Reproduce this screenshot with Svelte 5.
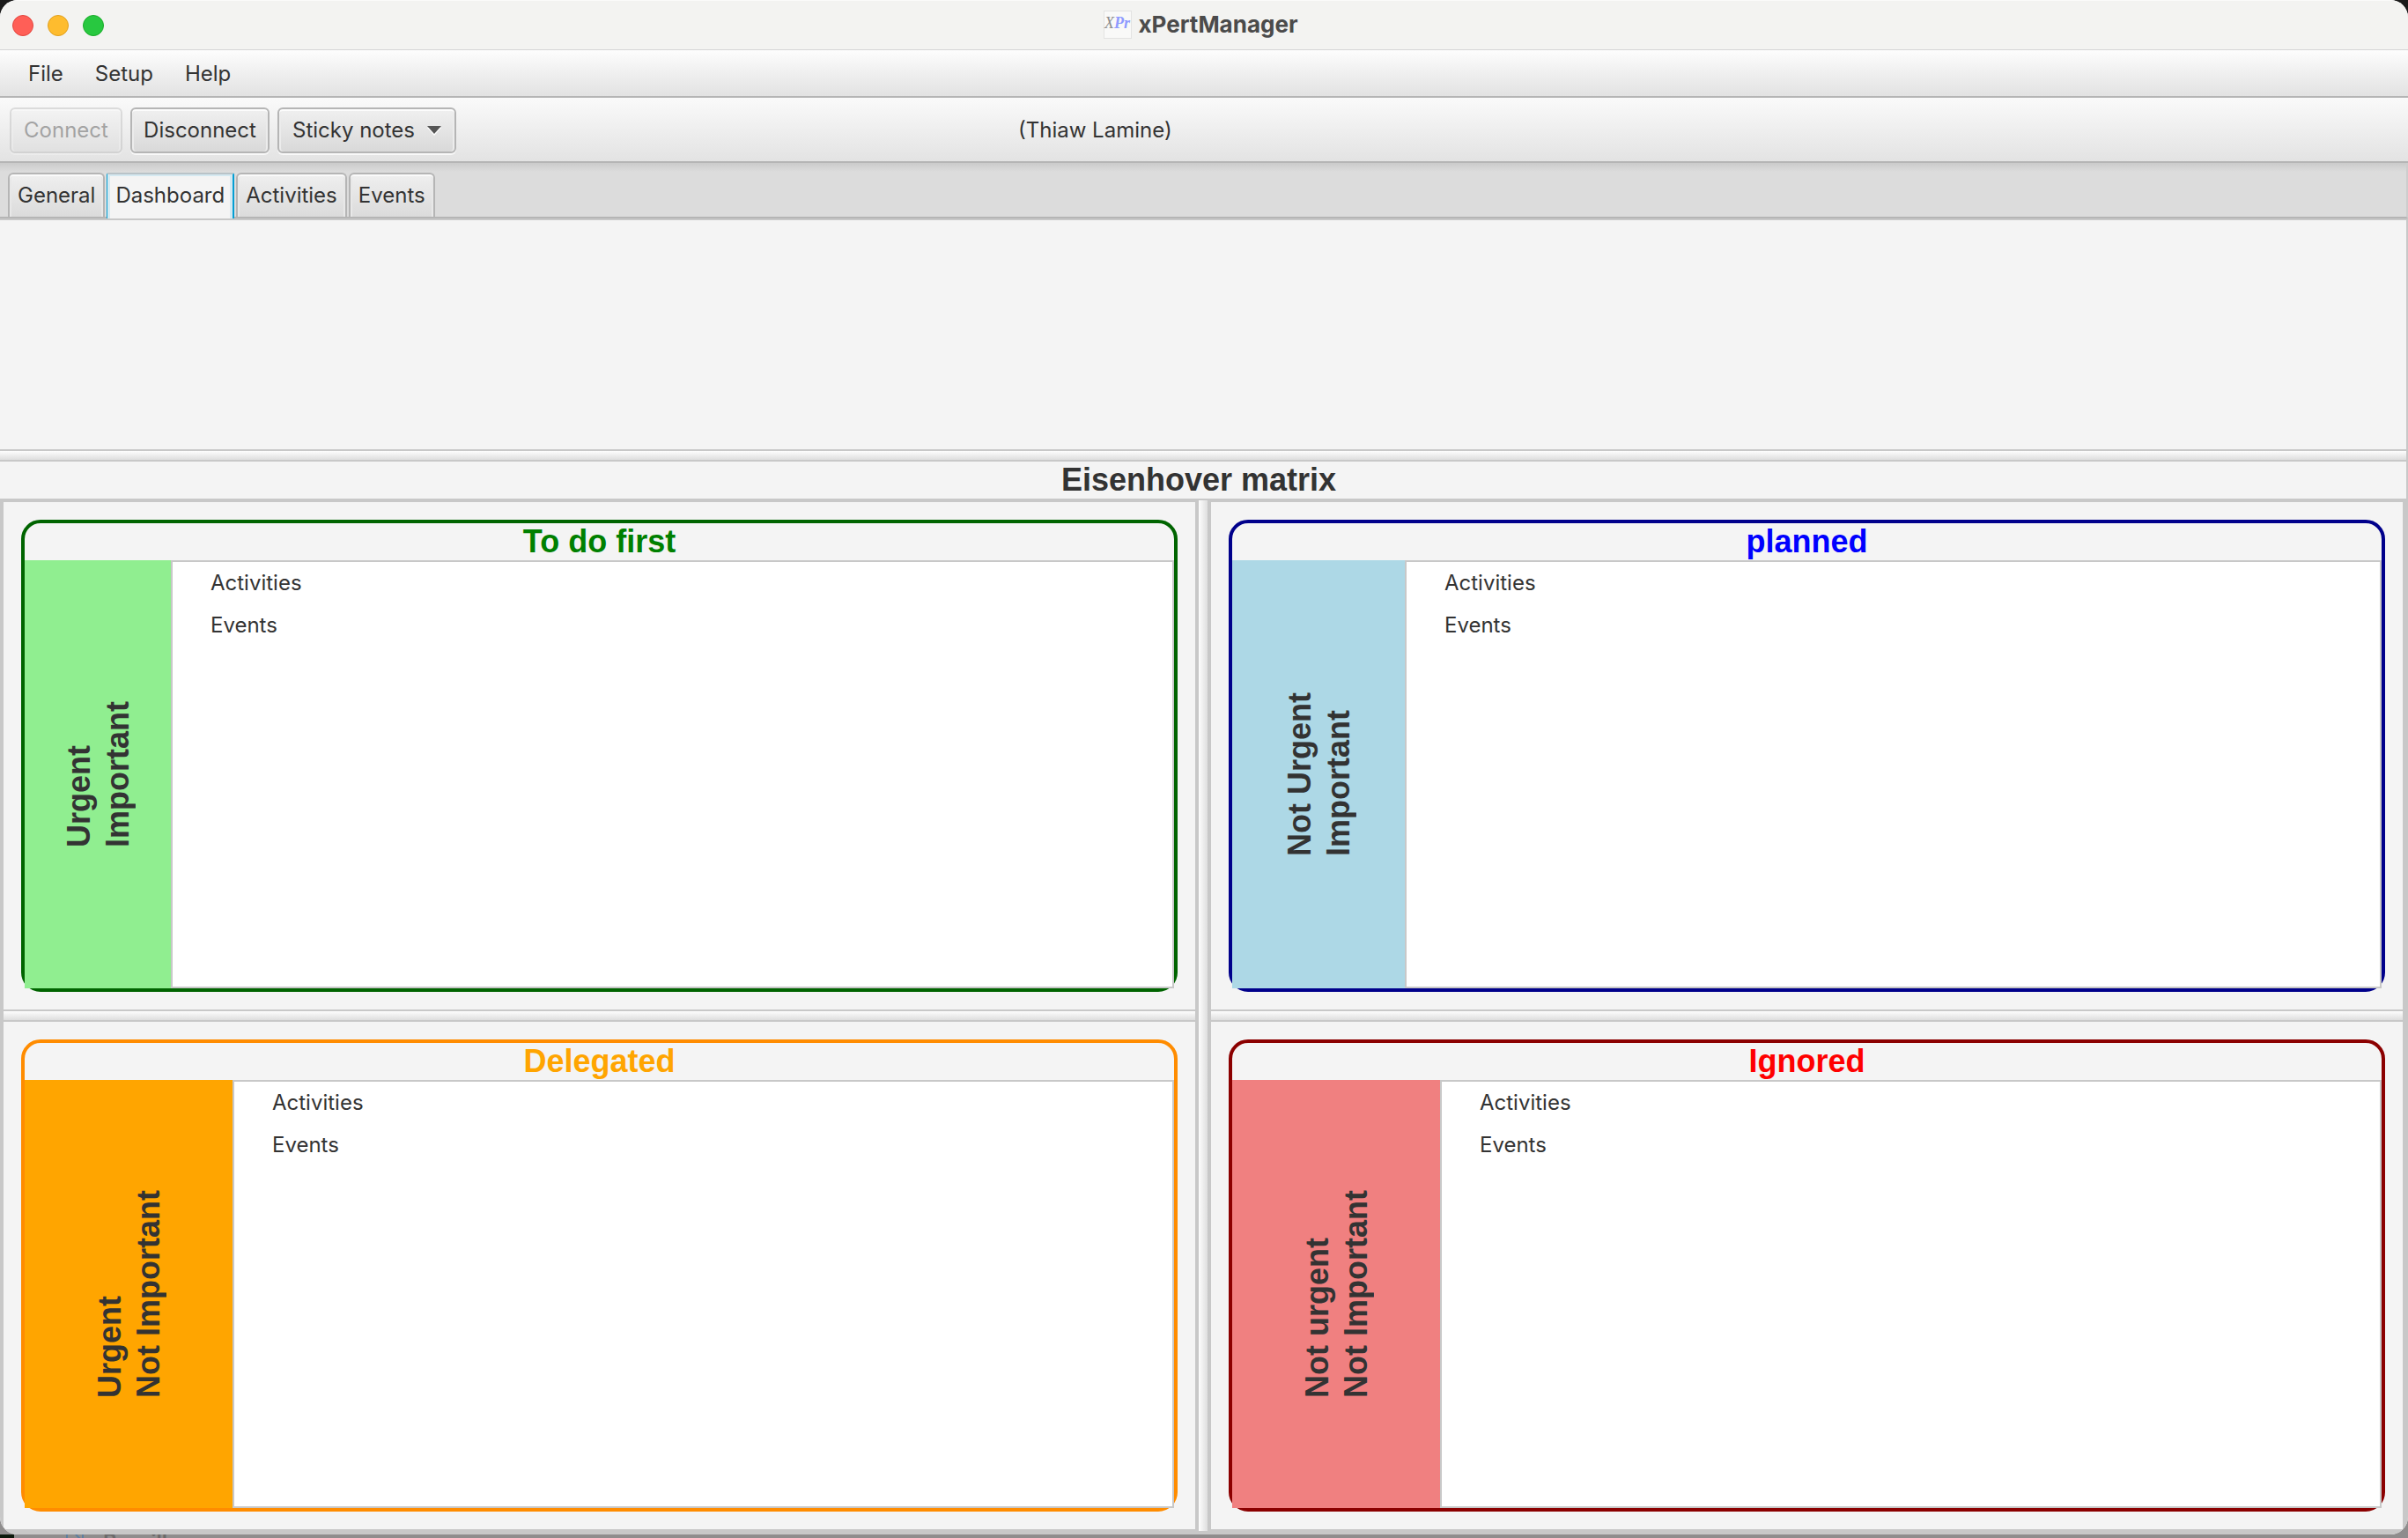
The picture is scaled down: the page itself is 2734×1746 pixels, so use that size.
<script>
  const menus = ['File', 'Setup', 'Help'];
  const tabs = ['General', 'Dashboard', 'Activities', 'Events'];
  let active = $state('Dashboard');

  const columns = [
    [
      { title: 'To do first', tone: 'green', side: 166, lines: ['Urgent', 'Important'] },
      { title: 'Delegated', tone: 'orange', side: 236, lines: ['Urgent', 'Not Important'] }
    ],
    [
      { title: 'planned', tone: 'blue', side: 196, lines: ['Not Urgent', 'Important'] },
      { title: 'Ignored', tone: 'red', side: 236, lines: ['Not urgent', 'Not Important'] }
    ]
  ];
</script>

<div class="desktop">
  <div class="window">
    <header class="titlebar">
      <div class="lights">
        <button class="light close" aria-label="Close"></button>
        <button class="light minimize" aria-label="Minimize"></button>
        <button class="light zoom" aria-label="Zoom"></button>
      </div>
      <div class="app-title">
        <span class="app-icon"><i>X</i><b>Pr</b></span>
        <span>xPertManager</span>
      </div>
    </header>

    <nav class="menubar">
      {#each menus as menu}
        <button class="menu">{menu}</button>
      {/each}
    </nav>

    <div class="toolbar">
      <button class="btn connect" disabled>Connect</button>
      <button class="btn disconnect">Disconnect</button>
      <button class="btn sticky">
        <span>Sticky notes</span>
        <svg class="arrow" viewBox="0 0 16 11" width="16" height="11" aria-hidden="true">
          <path d="M0 2H16L8 11Z" fill="#fff" />
          <path d="M0 0H16L8 9Z" fill="#555" />
        </svg>
      </button>
      <span class="user">(Thiaw Lamine)</span>
    </div>

    <div class="tabs" role="tablist">
      {#each tabs as tab}
        <button
          class="tab"
          class:selected={tab === active}
          role="tab"
          aria-selected={tab === active}
          onclick={() => (active = tab)}>{tab}</button>
      {/each}
    </div>

    <main class="content">
      <section class="summary"></section>
      <div class="divider horizontal"></div>
      <h1>Eisenhover matrix</h1>
      <div class="matrix">
        {#each columns as column, i}
          {#if i > 0}<div class="divider vertical"></div>{/if}
          <div class="column">
            {#each column as card, j}
              {#if j > 0}<div class="divider horizontal"></div>{/if}
              <section class="cell">
                <article class="card {card.tone}">
                  <h2>{card.title}</h2>
                  <div class="card-body">
                    <div class="side" style="width: {card.side}px">
                      <p>
                        {#each card.lines as line}<span>{line}</span>{/each}
                      </p>
                    </div>
                    <ul class="list">
                      <li>Activities</li>
                      <li>Events</li>
                    </ul>
                  </div>
                </article>
              </section>
            {/each}
          </div>
        {/each}
      </div>
    </main>
  </div>

  <div class="behind">
    <svg viewBox="0 0 20 16" width="20" height="16" aria-hidden="true">
      <path d="M1 0V15H19V0M11 0L19 8" fill="none" stroke="#5f7f9f" stroke-width="2" />
    </svg>
    <span>Brouillons</span>
  </div>
</div>

<style>
  :global(body) {
    margin: 0;
  }

  .desktop {
    display: flex;
    flex-direction: column;
    height: 100vh;
    box-sizing: border-box;
    background: linear-gradient(#1a1a1a 50%, #8f8d8d 50%);
    font-family: Inter, 'Liberation Sans', sans-serif;
    font-size: 24px;
    line-height: 32px;
    color: #333;
  }

  .window {
    flex: 1;
    min-height: 0;
    display: flex;
    flex-direction: column;
    overflow: hidden;
    border-radius: 20px;
    background: #f4f4f4;
  }

  button {
    font: inherit;
    color: inherit;
    margin: 0;
    padding: 0;
    border: 0;
    background: none;
    white-space: nowrap;
  }

  .titlebar {
    display: grid;
    grid-template-columns: 1fr auto 1fr;
    align-items: center;
    height: 56px;
    box-sizing: border-box;
    padding: 0 8px 2px 0;
    background: #f3f3f1;
    border-top: 1px solid #fafafa;
    box-shadow: 0 1px #d5d5d5;
    margin-bottom: 1px;
    flex: none;
  }

  .lights {
    display: flex;
    gap: 16px;
    padding: 2px 0 0 14px;
  }

  .light {
    width: 24px;
    height: 24px;
    border-radius: 50%;
    border: 1px solid;
  }

  .close {
    background: #ff5f57;
    border-color: #e2463f;
  }

  .minimize {
    background: #febc2e;
    border-color: #e0a01f;
  }

  .zoom {
    background: #28c840;
    border-color: #1aab29;
  }

  .app-title {
    display: flex;
    align-items: center;
    gap: 8px;
    font-size: 26px;
    font-weight: 700;
    color: #4b4b4b;
  }

  .app-icon {
    display: flex;
    justify-content: center;
    box-sizing: border-box;
    width: 32px;
    height: 32px;
    border: 1px solid #e3e3e2;
    background: #f9f9f8;
    font: italic 400 18px/27px 'Liberation Serif', serif;
    color: #8c8c8c;
  }

  .app-icon b {
    color: #8f9bff;
  }

  .menubar {
    display: flex;
    flex: none;
    align-items: center;
    height: 54px;
    box-sizing: border-box;
    padding: 2px 0 0 14px;
    border-bottom: 2px solid #b5b5b5;
    background: linear-gradient(#fdfdfd, #e2e2e2);
  }

  .menu {
    padding: 0 18px;
  }

  .toolbar {
    display: flex;
    flex: none;
    align-items: center;
    gap: 9px;
    height: 74px;
    box-sizing: border-box;
    padding: 2px 0 0 11px;
    border-bottom: 2px solid #b5b5b5;
    background: linear-gradient(#fafafa, #e3e3e3);
  }

  .btn {
    display: flex;
    align-items: center;
    justify-content: center;
    height: 52px;
    box-sizing: border-box;
    border: 2px solid #b5b5b5;
    border-radius: 6px;
    background: linear-gradient(#f0f0f0, #d9d9d9);
    box-shadow: inset 0 2px #fcfcfc, inset 2px 0 #ececec, inset -2px 0 #ececec, 0 2px #f8f8f8;
  }

  .connect {
    width: 128px;
    opacity: 0.4;
  }

  .disconnect {
    width: 158px;
  }

  .sticky {
    width: 203px;
    gap: 14px;
  }

  .user {
    margin-left: 629px;
  }

  .tabs {
    display: flex;
    flex: none;
    align-items: flex-end;
    gap: 2px;
    height: 63px;
    box-sizing: border-box;
    padding-left: 9px;
    border-bottom: 2px solid #b5b5b5;
    border-right: 2px solid #cdcdcd;
    background: linear-gradient(#cbcbcb, #dcdcdc 10px);
  }

  .tab {
    height: 50px;
    box-sizing: border-box;
    padding: 0 9px;
    border: 2px solid #b5b5b5;
    border-bottom: 0;
    border-radius: 6px 6px 0 0;
    background: linear-gradient(#efefef, #dbdbdb);
    box-shadow: inset 0 2px #fafafa, inset 2px 0 #e8e8e8, inset -2px 0 #e8e8e8;
  }

  .tab.selected {
    height: 52px;
    margin-bottom: -2px;
    padding-bottom: 2px;
    border-color: #b9c3c8 #039ed3 transparent;
    border-width: 2px 2px 0 1px;
    border-radius: 2px 2px 0 0;
    background: #f4f4f4;
    box-shadow: inset 0 2px #d5e9f1, inset 3px 0 #d5e9f1, inset -3px 0 #d5e9f1;
  }

  .content {
    flex: 1;
    min-height: 0;
    display: flex;
    flex-direction: column;
    border: 2px solid #c8c8c8;
    border-left: 0;
  }

  .summary {
    flex: none;
    height: 260px;
  }

  .divider {
    flex: none;
    box-sizing: border-box;
  }

  .divider.horizontal {
    height: 14px;
    border: solid #c8c8c8;
    border-width: 2px 0;
    background: linear-gradient(#fdfdfd, #dedede);
  }

  .divider.vertical {
    width: 14px;
    border: solid #c8c8c8;
    border-width: 0 2px;
    background: linear-gradient(90deg, #fdfdfd, #dedede);
  }

  h1,
  h2 {
    margin: 0;
    font: 700 36px/42px 'Liberation Sans', Arial, sans-serif;
    text-align: center;
    flex: none;
  }

  h1 {
    padding-right: 10px;
  }

  .matrix {
    flex: 1;
    min-height: 0;
    display: flex;
    border: 2px solid #c8c8c8;
  }

  .column {
    flex: 1;
    min-width: 0;
    display: flex;
    flex-direction: column;
    border: 2px solid #c8c8c8;
  }

  .cell {
    flex: 1;
    min-height: 0;
    display: flex;
    padding: 20px;
  }

  .card {
    flex: 1;
    min-width: 0;
    display: flex;
    flex-direction: column;
    border: 4px solid;
    border-radius: 22px;
  }

  .card-body {
    flex: 1;
    min-height: 0;
    display: flex;
  }

  .side {
    flex: none;
    display: flex;
    align-items: center;
    justify-content: center;
    box-sizing: border-box;
    padding-left: 2px;
  }

  .side p {
    margin: 0;
    writing-mode: vertical-rl;
    transform: rotate(180deg);
    font: 700 36px/44px 'Liberation Sans', Arial, sans-serif;
  }

  .side span {
    display: block;
  }

  .list {
    flex: 1;
    margin: 0;
    padding: 0 0 0 43px;
    list-style: none;
    border: 2px solid #c8c8c8;
    background: #fff;
    line-height: 48px;
  }

  .green {
    border-color: #006400;
  }
  .green h2 {
    color: #008000;
  }
  .green .side {
    background: #90ee90;
  }

  .blue {
    border-color: #00008b;
  }
  .blue h2 {
    color: #0000ff;
  }
  .blue .side {
    background: #add8e6;
  }

  .orange {
    border-color: #ff8c00;
  }
  .orange h2 {
    color: #ffa500;
  }
  .orange .side {
    background: #ffa500;
  }

  .red {
    border-color: #8b0000;
  }
  .red h2 {
    color: #ff0000;
  }
  .red .side {
    background: #f08080;
  }

  .behind {
    flex: none;
    display: flex;
    align-items: flex-start;
    gap: 22px;
    height: 4px;
    box-sizing: border-box;
    overflow: hidden;
    padding-left: 59px;
    border-left: 16px solid #0c1a0c;
    background: #8f8d8d;
    color: #6c6a6a;
    font-weight: 600;
    line-height: 18px;
  }
</style>
